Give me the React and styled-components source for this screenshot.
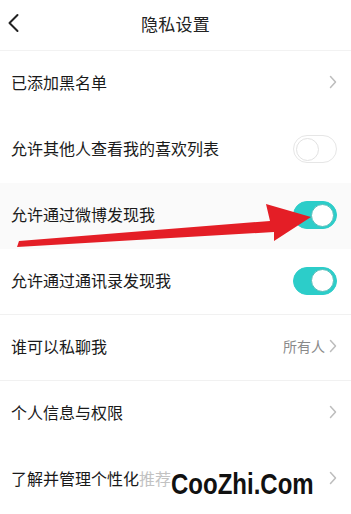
import React from "react";
import styled, { createGlobalStyle } from "styled-components";

const Global = createGlobalStyle`
  html, body { margin: 0; padding: 0; background: #fff; }
  body { font-family: "Noto Sans CJK SC", "Noto Sans", sans-serif; }
`;

const Page = styled.div`
  position: relative;
  width: 351px;
  height: 514px;
  overflow: hidden;
  background: #fff;
`;

const Header = styled.div`
  height: 50px;
  display: flex;
  align-items: center;
  justify-content: center;
  position: relative;
  border-bottom: 1px solid #f2f2f2;
`;

const Back = styled.div`
  position: absolute;
  left: 6px;
  top: 12px;
  width: 16px;
  height: 22px;
`;

const Title = styled.div`
  font-size: 17px;
  color: #222;
  letter-spacing: 0.3px;
  margin-top: -3px;
`;

const Row = styled.div`
  height: 66px;
  display: flex;
  align-items: center;
  justify-content: space-between;
  padding: 0 14px 2px 11px;
  background: ${(p) => (p.$shade ? "#fafafa" : "#fff")};
  border-bottom: ${(p) => (p.$line ? "1px solid #f1f1f1" : "none")};
  box-sizing: border-box;
`;

const Label = styled.div`
  font-size: 16px;
  color: #1a1a1a;
  margin-top: -2px;
`;

const Faded = styled.span`
  color: #c2c2c2;
`;

const Right = styled.div`
  display: flex;
  align-items: center;
  gap: 4px;
  font-size: 14px;
  color: #8a8a8a;
  margin-top: -2px;
`;

const Toggle = styled.div`
  width: 44px;
  height: 28px;
  border-radius: 14px;
  box-sizing: border-box;
  display: flex;
  align-items: center;
  justify-content: ${(p) => (p.$on ? "flex-end" : "flex-start")};
  padding: 2px;
  background: ${(p) => (p.$on ? "#2ccdc9" : "#fff")};
  border: 1px solid ${(p) => (p.$on ? "#2ccdc9" : "#e6e6e6")};
`;

const Knob = styled.div`
  width: 23px;
  height: 23px;
  border-radius: 50%;
  background: #fff;
  box-sizing: border-box;
  border: 1px solid ${(p) => (p.$on ? "#54bdb9" : "#e2e2e2")};
`;

const Arrow = styled.svg`
  position: absolute;
  left: 0;
  top: 0;
  pointer-events: none;
`;

const Watermark = styled.div`
  position: absolute;
  left: 171px;
  top: 467px;
  font-family: "Liberation Sans", Arial, sans-serif;
  font-weight: bold;
  font-size: 24px;
  line-height: 28px;
  color: #111;
  transform: scaleY(1.22);
  transform-origin: left top;
  text-shadow: 0 0 3px #fff, 0 0 3px #fff;
`;

const Chevron = () => (
  <svg width="8" height="14" viewBox="0 0 8 14">
    <path d="M1.5 1.5 L6.5 7 L1.5 12.5" fill="none" stroke="#bdbdbd" strokeWidth="1.5" strokeLinecap="round" strokeLinejoin="round" />
  </svg>
);

export default function App() {
  return (
    <Page>
      <Global />
      <Header>
        <Back>
          <svg width="16" height="22" viewBox="0 0 16 22">
            <path d="M11.5 3 L3.5 11 L11.5 19" fill="none" stroke="#222" strokeWidth="2" strokeLinecap="round" strokeLinejoin="round" />
          </svg>
        </Back>
        <Title>隐私设置</Title>
      </Header>
      <Row>
        <Label>已添加黑名单</Label>
        <Right><Chevron /></Right>
      </Row>
      <Row>
        <Label>允许其他人查看我的喜欢列表</Label>
        <Toggle><Knob /></Toggle>
      </Row>
      <Row $shade>
        <Label>允许通过微博发现我</Label>
        <Toggle $on><Knob $on /></Toggle>
      </Row>
      <Row $line>
        <Label>允许通过通讯录发现我</Label>
        <Toggle $on><Knob $on /></Toggle>
      </Row>
      <Row $line>
        <Label>谁可以私聊我</Label>
        <Right>所有人<Chevron /></Right>
      </Row>
      <Row>
        <Label>个人信息与权限</Label>
        <Right><Chevron /></Right>
      </Row>
      <Row>
        <Label>了解并管理个性化<Faded>推荐</Faded></Label>
        <Right><Chevron /></Right>
      </Row>
      <Arrow width="351" height="514" viewBox="0 0 351 514">
        <polygon points="17,247 19,241 270,221 266,204 311,217 274,241 274,232" fill="#e41e26" />
      </Arrow>
      <Watermark>CooZhi.Com</Watermark>
    </Page>
  );
}
